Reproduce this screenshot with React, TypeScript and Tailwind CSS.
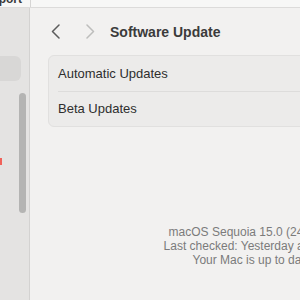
export default function App() {
  return (
    <div className="w-[300px] h-[300px] overflow-hidden flex flex-col bg-[#f2f1f0] font-['Liberation_Sans',Arial,sans-serif]">
      {/* cut-off top strip of the window behind */}
      <div className="h-[8px] flex border-b border-[#dcdbda] bg-[#f7f7f6] shrink-0">
        <div className="w-[31px] border-r border-[#d6d5d4] overflow-hidden">
          <div className="-mt-[8px] -ml-[24px] text-[12px] font-bold text-[#3a3a3a] leading-[15px] whitespace-nowrap">Support</div>
        </div>
      </div>

      <div className="flex flex-1 min-h-0">
        {/* sidebar */}
        <div className="relative w-[30px] shrink-0 bg-[#e4e3e2] border-r border-[#d3d2d1]">
          <div className="mt-[48px] h-[25px] w-[21px] rounded-r-[6px] bg-[#d8d7d6]" />
          <div className="absolute left-[19px] top-[85px] w-[7px] h-[120px] rounded-full bg-[#b4b4b3]" />
          <div className="absolute left-0 top-[150px] w-[2px] h-[7px] bg-[#f0625a]" />
        </div>

        {/* main pane */}
        <div className="w-[444px] shrink-0 px-[18px] flex flex-col">
          <div className="h-[47px] flex items-center">
            <svg width="10" height="15" viewBox="0 0 10 15" className="ml-[3px]">
              <polyline points="8,1 1.5,7.5 8,14" fill="none" stroke="#5c5c5c" strokeWidth="1.5" strokeLinecap="round" strokeLinejoin="round" />
            </svg>
            <svg width="10" height="15" viewBox="0 0 10 15" className="ml-[24px]">
              <polyline points="2,1 8.5,7.5 2,14" fill="none" stroke="#bdbdbc" strokeWidth="1.5" strokeLinecap="round" strokeLinejoin="round" />
            </svg>
            <h1 className="ml-[15px] text-[14px] font-bold text-[#3b3b3b] leading-none">Software Update</h1>
          </div>

          <div className="rounded-[6px] border border-[#e1e0df] bg-[#ecebea]">
            <div className="h-[35px] flex items-center px-[9px] text-[13px] text-[#2e2e2e]">Automatic Updates</div>
            <div className="ml-[9px] border-t border-[#dddcdb]" />
            <div className="h-[34px] flex items-center px-[9px] text-[13px] text-[#2e2e2e]">Beta Updates</div>
          </div>

          <div className="mt-[98px] text-center text-[12px] leading-[14px] text-[#7b7b7b] whitespace-nowrap">
            <p>macOS Sequoia 15.0 (24A335)</p>
            <p>Last checked: Yesterday at 21:41</p>
            <p>Your Mac is up to date</p>
          </div>
        </div>
      </div>
    </div>
  );
}
